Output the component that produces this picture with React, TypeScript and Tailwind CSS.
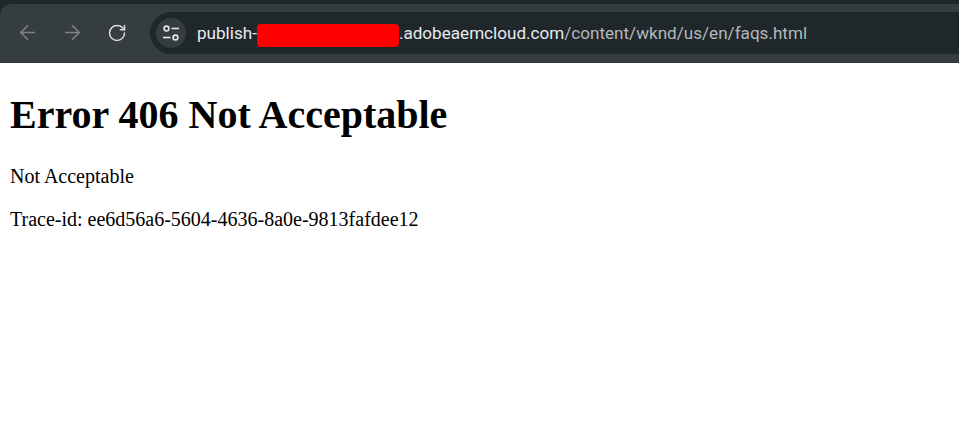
import { ArrowLeft, ArrowRight, RotateCw } from "lucide-react";

const SiteSettingsIcon = () => (
  <svg width="18" height="18" viewBox="0 0 18 18" fill="none" stroke="#e3e6e8" strokeWidth="1.6">
    <circle cx="4.5" cy="4.5" r="2.4" />
    <path d="M9.5 4.5H17" />
    <path d="M1 13.5H8.5" />
    <circle cx="13.5" cy="13.5" r="2.4" />
  </svg>
);

export default function App() {
  return (
    <div className="min-h-[433px] bg-white font-['Liberation_Serif',serif] text-black">
      {/* browser chrome */}
      <div className="h-[63px] bg-[#1f272b] pt-1">
        <div className="flex h-[58px] items-center rounded-tl-xl bg-[#363d41] pl-4">
          <ArrowLeft size={23} strokeWidth={1.6} className="mb-px text-[#7f8487]" />
          <ArrowRight size={23} strokeWidth={1.6} className="mb-px ml-[22px] text-[#7f8487]" />
          <RotateCw size={20} strokeWidth={1.8} className="mb-px ml-[23px] text-[#d9dcde]" />
          <div className="ml-[23px] flex h-[42px] flex-1 items-center rounded-l-[21px] bg-[#1f272b] pl-1.5">
            <div className="flex h-[30px] w-[30px] items-center justify-center rounded-full bg-[#363d41]">
              <SiteSettingsIcon />
            </div>
            <div className="ml-[11px] flex items-center font-['Roboto',sans-serif] text-[17.1px] whitespace-nowrap text-[#e8eaed]">
              <span className="pt-[2px]">publish-</span>
              <span className="mt-[5px] h-[23px] w-[142px] rounded-sm bg-[#ff0000]" />
              <span className="pt-[2px]">.adobeaemcloud.com</span>
              <span className="pt-[2px] text-[#b4b9bc]">/content/wknd/us/en/faqs.html</span>
            </div>
          </div>
        </div>
        <div className="h-px bg-[#2e3438]" />
      </div>

      {/* error page */}
      <div className="pl-2.5">
        <h1 className="mt-[29px] text-[40px] leading-[46px] font-bold">Error 406 Not Acceptable</h1>
        <p className="mt-[27px] text-[20px] leading-[23px]">Not Acceptable</p>
        <p className="mt-[20px] text-[20px] leading-[23px]">Trace-id: ee6d56a6-5604-4636-8a0e-9813fafdee12</p>
      </div>
    </div>
  );
}
